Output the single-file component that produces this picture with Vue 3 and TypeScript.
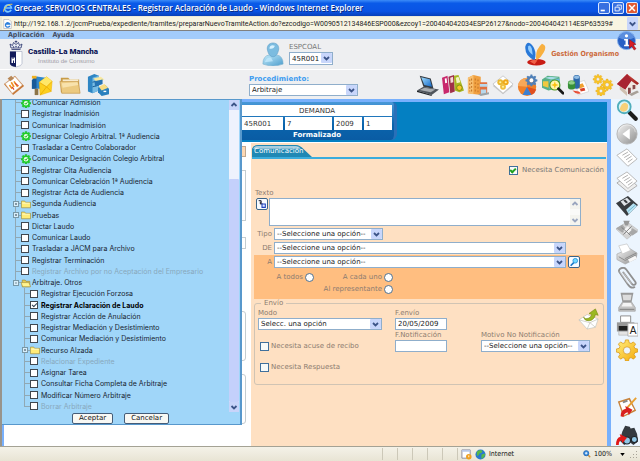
<script setup lang="ts">
import { ref } from 'vue'

type NodeKind = 'check' | 'done' | 'folder' | 'open'
interface TreeNode {
  label: string
  kind: NodeKind
  level: number
  off?: boolean
  last?: boolean
}

const nodes: TreeNode[] = [
  { label: 'Comunicar Admisión', kind: 'done', level: 0 },
  { label: 'Registrar Inadmisión', kind: 'check', level: 0 },
  { label: 'Comunicar Inadmisión', kind: 'check', level: 0 },
  { label: 'Designar Colegio Arbitral. 1ª Audiencia', kind: 'done', level: 0 },
  { label: 'Trasladar a Centro Colaborador', kind: 'check', level: 0 },
  { label: 'Comunicar Designación Colegio Arbitral', kind: 'done', level: 0 },
  { label: 'Registrar Cita Audiencia', kind: 'check', level: 0 },
  { label: 'Comunicar Celebración 1ª Audiencia', kind: 'check', level: 0 },
  { label: 'Registrar Acta de Audiencia', kind: 'check', level: 0 },
  { label: 'Segunda Audiencia', kind: 'folder', level: 0 },
  { label: 'Pruebas', kind: 'folder', level: 0 },
  { label: 'Dictar Laudo', kind: 'check', level: 0 },
  { label: 'Comunicar Laudo', kind: 'check', level: 0 },
  { label: 'Trasladar a JACM para Archivo', kind: 'check', level: 0 },
  { label: 'Registrar Terminación', kind: 'check', level: 0 },
  { label: 'Registrar Archivo por no Aceptación del Empresario', kind: 'check', level: 0, off: true },
  { label: 'Arbitraje. Otros', kind: 'open', level: 0, last: true },
  { label: 'Registrar Ejecución Forzosa', kind: 'check', level: 1 },
  { label: 'Registrar Aclaración de Laudo', kind: 'check', level: 1 },
  { label: 'Registrar Acción de Anulación', kind: 'check', level: 1 },
  { label: 'Registrar Mediación y Desistimiento', kind: 'check', level: 1 },
  { label: 'Comunicar Mediación y Desistimiento', kind: 'check', level: 1 },
  { label: 'Recurso Alzada', kind: 'folder', level: 1 },
  { label: 'Relacionar Expediente', kind: 'check', level: 1, off: true },
  { label: 'Asignar Tarea', kind: 'check', level: 1 },
  { label: 'Consultar Ficha Completa de Arbitraje', kind: 'check', level: 1 },
  { label: 'Modificar Número Arbitraje', kind: 'check', level: 1 },
  { label: 'Borrar Arbitraje', kind: 'check', level: 1, off: true, last: true },
]

const selected = ref('Registrar Aclaración de Laudo')
const url = ref(
  'http://192.168.1.2/jccmPrueba/expediente/tramites/prepararNuevoTramiteAction.do?ezcodigo=W0090512134846ESP000&ezcoy1=200404042034ESP26127&nodo=200404042114ESP63539#',
)
const needsNotice = ref(true)
const sendDate = ref('20/05/2009')

const quickTools = ['note', 'mailbox', 'folder-lg', 'cabinet']
const moduleTools = ['laptop', 'binders', 'building', 'seal', 'chart', 'search-box', 'server', 'gears', 'house']
const sideTools = ['magnifier', 'back', 'page', 'pages', 'floppy', 'puzzle', 'printer', 'clip', 'scanner', 'print-a', 'gear']
const sideEndTools = ['clipboard', 'binoculars']
</script>

<template>
  <svg class="defs" aria-hidden="true">
    <defs>
      <linearGradient id="g-blue" x1="0" y1="0" x2="1" y2="1"><stop offset="0" stop-color="#9fdcff" /><stop offset="1" stop-color="#1468c8" /></linearGradient>
      <linearGradient id="g-sky" x1="0" y1="0" x2="1" y2="1"><stop offset="0" stop-color="#c4ecfc" /><stop offset="1" stop-color="#4c9ccc" /></linearGradient>
      <linearGradient id="g-gold" x1="0" y1="0" x2="1" y2="1"><stop offset="0" stop-color="#fff080" /><stop offset="1" stop-color="#f4a808" /></linearGradient>
      <linearGradient id="g-grey" x1="0" y1="0" x2="1" y2="1"><stop offset="0" stop-color="#f4f4f4" /><stop offset="1" stop-color="#8e8e8e" /></linearGradient>
      <linearGradient id="g-red" x1="0" y1="0" x2="1" y2="1"><stop offset="0" stop-color="#e05a50" /><stop offset="1" stop-color="#8e1414" /></linearGradient>
      <path id="cog" d="M10.3 1h3.4l.6 3 2.1.9 2.6-1.7 2.4 2.4-1.7 2.6.9 2.1 3 .6v3.4l-3 .6-.9 2.1 1.7 2.6-2.4 2.4-2.6-1.7-2.1.9-.6 2.8h-3.4l-.6-2.8-2.1-.9L5 22l-2.4-2.4L4.300 17l-.9-2.100-3-.6v-3.400l3-.6.9-2.100L2.600 5.600 5 3.200l2.600 1.700L9.700 4zM12 8.500a4 4 0 1 0 0 8 4 4 0 0 0 0-8z" fill-rule="evenodd" />
    </defs>
    <symbol id="note" viewBox="0 0 24 24">
      <path d="M1 11 13 2l10 11-12 10z" fill="#c87838" /><path d="M2.500 10.500 13 3l8 9-11 9z" fill="#fff" stroke="#d8c8b8" stroke-width=".6" />
      <path d="m9 9 3 5M7 12l3 4M12 8l4 6" stroke="#f09020" stroke-width="1.800" /><path d="m13 10 4 3M10 14l2 3" stroke="#d84030" stroke-width="1.200" /><path d="m5 5 4-3 3 3-4 3z" fill="#b88858" />
    </symbol>
    <symbol id="mailbox" viewBox="0 0 24 24">
      <path d="M1 7q3-5 7-4l8 1v12H1z" fill="#2e86cc" /><path d="M1 7q2-4 5-3v12H1z" fill="#185a98" /><path d="M4 16h4v7H4z" fill="#8c7448" />
      <path d="m9 9 8-6 6 5-1 11-12 4z" fill="#fcd020" stroke="#f0b408" stroke-width=".6" /><path d="m9 9 8-6 6 5-6 6z" fill="#ffe868" /><path d="m9 9 8 5 6-6M10 23l7-9 5 5" fill="none" stroke="#e8a400" stroke-width=".8" /><path d="M1 2h5v3H1z" fill="#f0b020" />
    </symbol>
    <symbol id="folder-lg" viewBox="0 0 24 24">
      <path d="M2 4h8l2 2h10v14H2z" fill="#c89c48" /><path d="M4 6h17v3H4z" fill="#fff8e0" /><path d="M1 8h20l2 13H3z" fill="#ecca80" stroke="#c09040" stroke-width=".7" /><path d="m3 10 17-1 1 3-17 3z" fill="#f8e2ac" />
    </symbol>
    <symbol id="cabinet" viewBox="0 0 24 24">
      <path d="m1 3 7-3 5 2v16l-7 3-5-2z" fill="#2f86c4" /><path d="M6 4v17l7-3V2z" fill="#78bce4" /><path d="m6 9 7-2M6 14l7-2" stroke="#145890" />
      <path d="m7 5 8-2 4 3-8 3z" fill="#f8e8a0" /><path d="m8 8 9-2v5l-8 3z" fill="#2674b4" /><path d="m12 15 8-3 4 4v6l-8 2-4-4z" fill="#2a80be" /><path d="m13 14 6-3 4 4-7 3z" fill="#f8dc80" /><path d="M18 19h3" stroke="#fff" stroke-width="1.500" />
    </symbol>
    <symbol id="laptop" viewBox="0 0 24 24">
      <path d="m3 2 12 3 3 11-11-2z" fill="#343c44" /><path d="m4.500 3.500 9.500 2.300 2.300 8L8 12z" fill="url(#g-blue)" /><path d="m0 18 7-4 17 3-8 6z" fill="#50555c" /><path d="m3 17.500 5-2.500 12 2-5 3z" fill="#a8acb0" /><path d="m0 18 16 5v1L0 19.500z" fill="#202428" />
    </symbol>
    <symbol id="binders" viewBox="0 0 24 24">
      <path d="m0 4 6-2 2 18-6 2z" fill="#c8286c" /><path d="m3 5 2-.5.500 5-2 .5z" fill="#fff" /><path d="m7 3 6-2 1 18-5 2z" fill="#a03048" /><path d="m9 4 3-1 .4 6-3 .8z" fill="#f4d8d8" /><path d="m13 2 5-1 6 17-5 2-5-2z" fill="#a8b820" /><path d="m15 4 3-1 2 6-4 1z" fill="#f4f4c0" /><circle cx="19" cy="15" r="3" fill="#f4c828" stroke="#808810" />
    </symbol>
    <symbol id="building" viewBox="0 0 24 24">
      <path d="m1 4 6-3 8 2v20L1 21z" fill="#f0a040" /><path d="m1 4 6-3v21l-6-1z" fill="#f8c070" /><path d="M3 6v13M5 5v14M9 5v15M12 6v14" stroke="#c87828" stroke-dasharray="2 2" stroke-width="1.200" /><path d="M14 9h8v13h-8z" fill="#e07040" /><path d="M14 11h8v3h-8zM15 17h6v5h-6z" fill="#b8d8ec" /><path d="m12 22 12-2v2l-9 2z" fill="#9ca4a8" />
    </symbol>
    <symbol id="seal" viewBox="0 0 24 24">
      <path d="m1 13 11-10 11 10-11 9z" fill="#c8c8c8" /><path d="M1 11 12 2l11 9-11 10z" fill="#fff" stroke="#bcbcbc" stroke-width=".8" /><circle cx="9" cy="9" r="3.200" fill="#eab830" /><circle cx="15" cy="9" r="3.200" fill="#f0a818" /><circle cx="12" cy="14" r="3.200" fill="#f0c040" /><circle cx="9" cy="9" r="1.200" fill="#fff0a0" /><circle cx="15" cy="9" r="1.200" fill="#fff0a0" /><circle cx="12" cy="14" r="1.200" fill="#fff0a0" />
    </symbol>
    <symbol id="chart" viewBox="0 0 24 24">
      <circle cx="11" cy="14" r="10" fill="#f08028" /><path d="M11 14 1 13a10 10 0 0 1 10-9z" fill="#f8a858" /><path d="m11 14 5 9H6z" fill="#3c80d0" /><path d="M11 14 21 17q-1 4-5 6z" fill="#e05020" /><g transform="translate(9 0) scale(.56)"><use href="#cog" fill="#5080b8" /></g><circle cx="15.700" cy="7" r="2" fill="#fff" />
    </symbol>
    <symbol id="search-box" viewBox="0 0 24 24">
      <path d="m0 6 6-4 13 1 1 12-13 3-7-3z" fill="#58b088" /><path d="M1 8h6v7l-6-2z" fill="#f0c840" /><path d="m8 7 11-2v8L8 16z" fill="#68b8d8" /><path d="m3 4 6-1 9 1-8 2z" fill="#a8dce8" /><circle cx="14" cy="12" r="5.500" fill="#fff4a8" stroke="#50981c" stroke-width="1.200" /><path d="m14 8 1 3 3 1-3 1-1 3-1-3-3-1 3-1z" fill="#f8c010" /><path d="m18 16 5 5" stroke="#181818" stroke-width="3" stroke-linecap="round" />
    </symbol>
    <symbol id="server" viewBox="0 0 24 24">
      <path d="m10 10 9-3 5 12-12 4z" fill="#fff" stroke="#c8c8c8" stroke-width=".6" /><path d="m12 12 5-2 2 4-6 2z" fill="#f0a030" /><path d="m14 16 5-1 1 3-5 1z" fill="#d84028" /><rect x="7" y="1" width="7" height="15" rx="3" fill="#2c68a8" /><rect x="1" y="7" width="8" height="10" rx="3" fill="#389038" /><ellipse cx="10.500" cy="3.500" rx="3" ry="2" fill="#90bce4" /><ellipse cx="5" cy="9.500" rx="3.500" ry="2" fill="#90d088" /><path d="M6 18q4 5 9 3l-2-2z" fill="#e85038" />
    </symbol>
    <symbol id="gears" viewBox="0 0 24 24">
      <g fill="#f8c428" stroke="#e0a010" stroke-width=".8"><g transform="translate(1 0) scale(.46)"><use href="#cog" /></g><g transform="translate(10 5) scale(.54)"><use href="#cog" /></g><g transform="translate(4 12.500) scale(.48)"><use href="#cog" /></g></g>
    </symbol>
    <symbol id="house" viewBox="0 0 24 24">
      <path d="m3 12 8 8 11-4V8L12 3z" fill="#f0e8e0" /><path d="m3 12 8 8v4l-8-7z" fill="#d0c0b0" /><path d="M0 11 11 0l13 10-2 2-7-5-6 10z" fill="url(#g-red)" /><path d="m0 11 9 6 7-10-5-7z" fill="#a82430" /><path d="M12 15h3v6l-3 1zM17 12h3v4l-3 1z" fill="#884848" /><path d="m13 22 9-4 2 2-8 4z" fill="#a8a098" />
    </symbol>
    <symbol id="magnifier" viewBox="0 0 24 24">
      <path d="m15 15 6.500 6.500" stroke="#1c1c1c" stroke-width="4.500" stroke-linecap="round" /><circle cx="9" cy="8.500" r="7" fill="#d8f4f8" stroke="#50aebc" stroke-width="2" /><path d="M4 11q2-7 6-7 4 1 3 5 0 4-5 5-3 0-4-3z" fill="#f8d078" />
    </symbol>
    <symbol id="back" viewBox="0 0 24 24">
      <circle cx="12" cy="12" r="11" fill="url(#g-grey)" stroke="#b4b4b4" /><path d="m7 12 8-6v12z" fill="#fff" /><path d="M3 10a9 8 0 0 1 18 0" fill="none" stroke="#fff" opacity=".5" />
    </symbol>
    <symbol id="page" viewBox="0 0 24 24">
      <path d="M1 9 12 2l11 11-10 8z" fill="#fff" stroke="#b4b4b4" /><path d="m7 9 6-3.500M9 11.500 15 8M11 14l6-4M13 16.500l5-3.500" stroke="#a8a8a8" />
    </symbol>
    <symbol id="pages" viewBox="0 0 24 24">
      <path d="M1 13 12 6l11 10-10 7z" fill="#eee" stroke="#a8a8a8" /><path d="M1 8 12 1l11 10-10 8z" fill="#fff" stroke="#b4b4b4" /><path d="m7 8 6-3.500M9 10.500 15 7M11 13l6-4M13 15.500l5-3.500" stroke="#a8a8a8" />
    </symbol>
    <symbol id="floppy" viewBox="0 0 24 24">
      <path d="M0 9 13 1l11 10-12 12z" fill="#383c40" /><path d="m5 7 7-4 4 4-7 5z" fill="#e0e4e8" /><path d="m8 6 2-1 3 3-2 1z" fill="#383c40" /><path d="m11 16 8-7 4 3-9 9z" fill="#b8e4f4" /><path d="m13 18 8-7" stroke="#6cb0cc" />
    </symbol>
    <symbol id="puzzle" viewBox="0 0 24 24">
      <path d="m0 11 12-8 12 9-12 10z" fill="#d4d4d4" stroke="#b8b8b8" stroke-width=".6" /><path d="M8 2h7l-2 5h-3z" fill="#989898" /><path d="m0 10 7-4 4 5-4 4zM13 15l5-5 6 4-6 4z" fill="#a8a8a8" /><path d="m8 12 5-4 4 4-5 5z" fill="#f4f4f4" /><path d="m6 9 10 9M17 8 8 17" stroke="#777" />
    </symbol>
    <symbol id="printer" viewBox="0 0 24 24">
      <path d="m1 12 14-6 8 5-1 6-12 6-9-5z" fill="url(#g-grey)" stroke="#9c9c9c" stroke-width=".6" /><path d="m3 3 9-2 4 7-9 4z" fill="#fff" stroke="#c0c0c0" stroke-width=".7" /><path d="m10 17 12-6M3 15l7 4 12-6" fill="none" stroke="#888" /><path d="m13 18 8-4 2 3-8 4z" fill="#f8f8f8" />
    </symbol>
    <symbol id="clip" viewBox="0 0 24 24">
      <path d="m8 6 9 12c2 3 6 1 4-2L11 2.500C8-1 1 2 4 6l9 13c2 3 5 4 7 3" fill="none" stroke="#909090" stroke-width="2" stroke-linecap="round" /><path d="m8 6 9 12M4 5l9 13" stroke="#eee" stroke-width=".6" />
    </symbol>
    <symbol id="scanner" viewBox="0 0 24 24">
      <path d="M5 2h14l-2 10H7z" fill="#999" /><path d="M7 4h10l-1 6H8z" fill="#dcdcdc" /><path d="M7 12h10l4 6v4H3v-4z" fill="#c4c4c4" stroke="#999" stroke-width=".7" /><path d="M8 13h8l2 4H6z" fill="#f4f4f4" /><path d="M4 20h16" stroke="#787878" />
    </symbol>
    <symbol id="print-a" viewBox="0 0 24 24">
      <path d="M5 1h11v7H5z" fill="#fff" stroke="#888" /><path d="M1 8h19v10H1z" fill="#989898" /><path d="M3 12h11v5H3z" fill="#202020" /><path d="M3 18h11v4H3z" fill="#e4e4e4" stroke="#999" stroke-width=".5" /><path d="M13 9h11v14H13z" fill="#fff" stroke="#b0b0b0" /><text x="15" y="20.500" font-size="11" font-family="Liberation Sans, sans-serif" fill="#222">A</text>
    </symbol>
    <symbol id="gear" viewBox="0 0 24 24"><use href="#cog" fill="url(#g-gold)" stroke="#d89410" stroke-width=".8" /></symbol>
    <symbol id="clipboard" viewBox="0 0 24 24">
      <path d="m2 6 13-4 7 14-14 7z" fill="#c8843c" /><path d="m4 7 10-3 6 11-11 6z" fill="#fff" /><path d="m7 6 5-2 1 2-5 2z" fill="#888" /><path d="m11 14 11-12" stroke="#e8a030" stroke-width="2" /><path d="M5 22q0-7 6-8l-1-3 8 4-4 6-1-3q-4 0-5 5z" fill="#d82020" />
    </symbol>
    <symbol id="binoculars" viewBox="0 0 24 24">
      <path d="m7 8 3-6 5 1 1 2 4-1 3 7 1 8-5 4-5-4-5 4-5-5z" fill="#343a40" /><circle cx="12" cy="18" r="3.800" fill="#90c8e8" stroke="#202428" stroke-width="1.200" /><circle cx="20" cy="17" r="3.300" fill="#90c8e8" stroke="#202428" stroke-width="1.200" /><path d="M0 23q0-8 5-9l-1-3 8 4-5 6-1-3q-3 0-3 5z" fill="#e01818" />
    </symbol>
    <symbol id="check-gear" viewBox="0 0 24 24"><use href="#cog" fill="#20d028" stroke="#10b018" /><circle cx="12" cy="12.500" r="5.500" fill="#e8ffe4" /><path d="m9 12 2.500 3 4-5" fill="none" stroke="#18a820" stroke-width="2.200" /></symbol>
    <symbol id="dir" viewBox="0 0 24 20"><path d="M1 3h8l2 3h12v13H1z" fill="#ffec78" stroke="#9c8838" stroke-width="1.600" /><path d="M3 8h18" stroke="#fffbd0" stroke-width="2" /></symbol>
    <symbol id="dir-open" viewBox="0 0 24 20"><path d="M3 3h7l2 3h9v13H3z" fill="#e8cc50" stroke="#9c8838" stroke-width="1.600" /><path d="M0 9h19l4 10H4z" fill="#fff490" stroke="#9c8838" stroke-width="1.400" /></symbol>
    <symbol id="chev" viewBox="0 0 10 10"><path d="m2.500 4 2.500 2.500L7.500 4" fill="none" stroke="#3c5488" stroke-width="1.800" /></symbol>
  </svg>

  <div class="window">
    <header class="titlebar">
      <svg class="ie" viewBox="0 0 16 16"><path d="M13 11a5.500 5.500 0 1 1 .5-3H4" fill="none" stroke="#7cc8ff" stroke-width="2.600" /><path d="M1 14C-1 10 8 1 15 2" fill="none" stroke="#f8d048" stroke-width="1.500" /></svg>
      <h1>Grecae: SERVICIOS CENTRALES - Registrar Aclaración de Laudo - Windows Internet Explorer</h1>
      <button class="wbtn" aria-label="Minimizar"><svg viewBox="0 0 12 12"><path d="M2 9h5" stroke="#fff" stroke-width="2" /></svg></button>
      <button class="wbtn" aria-label="Restaurar"><svg viewBox="0 0 12 12"><path d="M5 4V2.500h5v5H8M2.500 5h5v4.500h-5z" fill="none" stroke="#fff" /></svg></button>
      <button class="wbtn close" aria-label="Cerrar"><svg viewBox="0 0 12 12"><path d="m2.500 2.500 7 7m0-7-7 7" stroke="#fff" stroke-width="1.800" /></svg></button>
    </header>

    <div class="address">
      <div class="address-box">
        <svg class="page-ie" viewBox="0 0 12 12"><path d="M1 0h7l3 3v9H1z" fill="#fff" stroke="#99a" stroke-width=".7" /><path d="M9 8.500A3 3 0 1 1 9 6H3.500" fill="none" stroke="#2c80dc" stroke-width="1.700" /></svg>
        <input v-model="url" aria-label="Dirección" />
        <svg class="arrow"><use href="#chev" /></svg>
      </div>
    </div>

    <nav class="menu"><a href="#">Aplicación</a><a href="#">Ayuda</a></nav>

    <div class="brand-row">
      <div class="brand">
        <svg class="shield" viewBox="0 0 28 54">
          <path d="M4 15 2 7l5 3 2-6 5 4 5-4 2 6 5-3-2 8z" fill="#e8ecf4" stroke="#28346c" stroke-width="1.600" /><path d="M14 0v5M11.500 2h5M5 18h18" stroke="#28346c" stroke-width="1.600" /><circle cx="9" cy="13" r="1.400" fill="#28346c" /><circle cx="14" cy="12" r="1.400" fill="#28346c" /><circle cx="19" cy="13" r="1.400" fill="#28346c" />
          <path d="M2 22h24v24q0 5-12 7-12-2-12-7z" fill="#fff" stroke="#9ca4bc" stroke-width="1.200" /><path d="M2 22h12v31Q2 51 2 46z" fill="#141c5c" /><path d="M5 34h2v3h2v-3h3v11H5z" fill="#fff" /><path d="M8 40h2v5H8z" fill="#141c5c" />
        </svg>
        <p><strong>Castilla-La Mancha</strong><span>Instituto de Consumo</span></p>
      </div>
      <div class="user">
        <svg class="person" viewBox="0 0 24 26"><path d="M1 24q0-9 7-10h8q7 1 7 10-11 4-22 0z" fill="url(#g-sky)" stroke="#78b0d0" stroke-width=".7" /><path d="M12 1c5 0 7 4 6 8s-3 7-6 7-5-3-6-7 1-8 6-8z" fill="#7cbce0" stroke="#60a0c8" stroke-width=".7" /><path d="M8 7q1-5 6-3-1 4-6 3z" fill="#d8f2ff" /><path d="M3 22q2-6 7-5l2 4z" fill="#c8ecff" opacity=".7" /></svg>
        <div>
          <label for="office">ESPCOAL</label>
          <div class="sel sel-office"><select id="office"><option>45R001</option></select><svg class="arrow"><use href="#chev" /></svg></div>
        </div>
      </div>
      <a class="org" href="#">
        <svg viewBox="0 0 24 26"><ellipse cx="13" cy="22" rx="10" ry="3.500" fill="#c81c14" /><path d="M13 20Q11 9 19 2q6 2 2 9-3 6-8 9z" fill="#f8b040" /><path d="M11 20Q0 15 1 5q2-7 7-2 6 7 3 17z" fill="#2878d8" /><path d="M4 5q2-3 4 2l1 7Q3 10 4 5z" fill="#90ccff" /><path d="M6 21q4-3 8-1l-3 4z" fill="#f06048" /></svg>
        Gestión Organismo
      </a>
      <button class="info" aria-label="Información">
        <svg viewBox="0 0 22 22"><circle cx="11" cy="10" r="9.500" fill="#2860c4" stroke="#8cb4ec" /><path d="M3 7a8 7 0 0 1 16 0q-8 4-16 0z" fill="#7cacf0" opacity=".6" /><circle cx="11" cy="5" r="1.700" fill="#fff" /><path d="M8.500 8.500h4v6h1.500V16H8.500v-1.500H10V10H8.500z" fill="#fff" /><path d="m14 9 7 5-3 .6 3 4-2 1.400-2.600-4L14 18z" fill="#d81c24" stroke="#801018" stroke-width=".5" /></svg>
      </button>
    </div>

    <div class="tool-row">
      <div class="tools quick"><button v-for="t in quickTools" :key="t" class="tool" :aria-label="t"><svg><use :href="'#' + t" /></svg></button></div>
      <div class="proc">
        <label for="proc">Procedimiento:</label>
        <div class="sel"><select id="proc"><option>Arbitraje</option></select><svg class="arrow"><use href="#chev" /></svg></div>
      </div>
      <div class="tools modules"><button v-for="t in moduleTools" :key="t" class="tool" :aria-label="t"><svg><use :href="'#' + t" /></svg></button></div>
    </div>

    <main class="main">
      <section class="frame">
        <div class="band">
          <table class="case">
            <colgroup><col class="c-office" /><col class="c-num" /><col class="c-year" /><col /></colgroup>
            <thead><tr><th colspan="4">DEMANDA</th></tr></thead>
            <tbody><tr><td>45R001</td><td>7</td><td>2009</td><td>1</td></tr></tbody>
            <tfoot><tr><td colspan="4">Formalizado</td></tr></tfoot>
          </table>
        </div>
        <div class="columns">
          <div class="under"><i class="u-tab"></i><i class="u-box"></i><i class="u-line"></i><i class="u-set"></i><i class="u-set"></i></div>
          <form class="panel" @submit.prevent>
            <div class="tabs"><svg class="tab-shape" viewBox="0 0 60 13" preserveAspectRatio="none"><path d="M0 13V4Q1 0 6 0h38q4 0 8 5l8 8z" fill="#2088b4" /><path d="M1 4q1-3 5-3h38q3 0 5 3z" fill="#a8cede" /></svg><a href="#">Comunicación</a></div>
            <label class="notice"><input v-model="needsNotice" type="checkbox" />Necesita Comunicación</label>
            <label class="cap" for="texto">Texto</label>
            <div class="text-row">
              <button class="mini" aria-label="Insertar texto"><svg viewBox="0 0 12 12"><path d="M2 2h3v4M4 3v3h3" fill="none" stroke="#223" stroke-width="1.200" /><path d="M6 6h4v4H6z" fill="#dde8ff" stroke="#2244c0" stroke-width="1.300" /></svg></button>
              <div class="area"><textarea id="texto"></textarea><div class="area-bar"><svg class="flip"><use href="#chev" /></svg><svg><use href="#chev" /></svg></div></div>
            </div>
            <div class="row"><label for="tipo">Tipo</label><div class="sel sel-type"><select id="tipo"><option>--Seleccione una opción--</option></select><svg class="arrow"><use href="#chev" /></svg></div></div>
            <div class="row"><label for="de">DE</label><div class="sel sel-wide"><select id="de"><option>--Seleccione una opción--</option></select><svg class="arrow"><use href="#chev" /></svg></div></div>
            <div class="to">
              <div class="row"><label for="a">A</label><div class="sel sel-wide"><select id="a"><option>--Seleccione una opción--</option></select><svg class="arrow"><use href="#chev" /></svg></div>
                <button class="mini" aria-label="Buscar"><svg viewBox="0 0 12 12"><path d="m2 10.500 4-4" stroke="#1878c8" stroke-width="2" /><circle cx="7.500" cy="4.500" r="2.800" fill="#70d8ff" stroke="#2090d8" /></svg></button></div>
              <div class="radios">
                <label>A todos<input type="radio" name="dest" /></label><label>A cada uno<input type="radio" name="dest" /></label>
                <label class="second">Al representante<input type="radio" name="dest" /></label>
              </div>
            </div>
            <fieldset>
              <legend>Envío</legend>
              <div class="send">
                <div class="mode">
                  <label for="modo">Modo</label>
                  <div class="sel"><select id="modo"><option>Selecc. una opción</option></select><svg class="arrow"><use href="#chev" /></svg></div>
                  <label class="tick"><input type="checkbox" />Necesita acuse de recibo</label>
                  <label class="tick"><input type="checkbox" />Necesita Respuesta</label>
                </div>
                <div class="dates">
                  <label for="fenvio">F.envío</label><input id="fenvio" v-model="sendDate" type="text" />
                  <label for="fnot">F.Notificación</label><input id="fnot" type="text" />
                </div>
                <div class="reason">
                  <svg class="envelope" viewBox="0 0 24 24"><path d="m1 13 9-6 12 5-3 9-9 2z" fill="#fff" stroke="#c8c8c0" stroke-width=".8" /><path d="m1 13 12 3 9-4M10 23l3-7 6 5" fill="none" stroke="#c4c4bc" stroke-width=".8" /><path d="M6 10q2 3 6 1 3-2 3-4l-3-1 7-5 3 7-3-1q-1 6-7 7-5 0-6-4z" fill="#9cb820" stroke="#788c10" stroke-width=".7" /></svg>
                  <label for="motivo">Motivo No Notificación</label>
                  <div class="sel"><select id="motivo"><option>--Seleccione una opción--</option></select><svg class="arrow"><use href="#chev" /></svg></div>
                </div>
              </div>
            </fieldset>
          </form>
        </div>
      </section>

      <aside class="side">
        <button v-for="t in sideTools" :key="t" class="tool" :aria-label="t"><svg><use :href="'#' + t" /></svg></button>
        <span class="spacer"></span>
        <button v-for="t in sideEndTools" :key="t" class="tool end" :aria-label="t"><svg><use :href="'#' + t" /></svg></button>
      </aside>

      <div class="popup">
        <div class="tree-wrap">
          <ul class="tree">
            <li v-for="n in nodes" :key="n.label" :class="['lv' + n.level, { off: n.off, last: n.last }]">
              <span class="branch"><button v-if="n.kind === 'folder' || n.kind === 'open'" class="toggle" :aria-label="n.label"><svg viewBox="0 0 7 7"><path :d="n.kind === 'folder' ? 'M2 3.500h3M3.500 2v3' : 'M2 3.500h3'" stroke="#123" /></svg></button></span>
              <svg v-if="n.kind !== 'check'" class="glyph"><use :href="n.kind === 'done' ? '#check-gear' : n.kind === 'folder' ? '#dir' : '#dir-open'" /></svg>
              <label v-if="n.kind === 'check'" :class="{ on: selected === n.label }"><input v-model="selected" type="radio" name="tramite" class="box" :value="n.label" :disabled="n.off" />{{ n.label }}</label>
              <span v-else class="name">{{ n.label }}</span>
            </li>
          </ul>
          <div class="scroll"><svg class="flip"><use href="#chev" /></svg><div class="thumb"></div><svg><use href="#chev" /></svg></div>
        </div>
        <div class="actions"><button>Aceptar</button><button>Cancelar</button></div>
      </div>
    </main>

    <footer class="status">
      <i></i><i></i><i></i><i></i><i></i><i></i>
      <svg class="s-icon" viewBox="0 0 12 12"><path d="M1 1h9v9H1z" fill="#fff" stroke="#889" /><path d="M1 1h9v2H1z" fill="#b8c8e8" /><circle cx="8.500" cy="8.500" r="3" fill="#f0a020" /><path d="M8.500 7v2" stroke="#fff" /></svg>
      <svg class="s-icon" viewBox="0 0 12 12"><circle cx="6" cy="6" r="5.500" fill="#2878d0" /><path d="M2 3q3-3 6-1 0 3-3 3-1 3-3 2zM7 6l4-1q0 4-4 6z" fill="#58b848" /></svg>
      <span>Internet</span>
      <svg class="zoom-icon" viewBox="0 0 10 10"><path d="m6 6 3 3" stroke="#c89040" stroke-width="1.800" /><circle cx="4" cy="4" r="3.200" fill="#3c90e0" stroke="#1c60b0" /><path d="M2.500 4h3M4 2.500v3" stroke="#fff" /></svg>
      <span class="pct">100%</span>
      <svg class="caret" viewBox="0 0 6 4"><path d="M0 0h6L3 4z" /></svg>
      <svg class="grip" viewBox="0 0 8 8"><path d="M6 1h1v1H6zM6 4h1v1H6zM6 7h1v1H6zM3 4h1v1H3zM3 7h1v1H3zM0 7h1v1H0z" fill="#a8a498" /></svg>
    </footer>
  </div>
</template>

<style>
body { background: #fff; }
</style>

<style scoped>
* { box-sizing: border-box; }
.defs { position: absolute; width: 0; height: 0; }
.window { display: flex; flex-direction: column; min-height: 100vh; font: 7px/10px "DejaVu Sans", Verdana, sans-serif; color: #333; }
button, input, select, textarea { font: inherit; margin: 0; padding: 0; border: 0; background: none; color: inherit; }
a { color: inherit; text-decoration: none; }
svg { display: block; }

.titlebar { display: flex; align-items: center; gap: 1px; height: 16px; padding: 0 2px 0 3px; background: linear-gradient(#3c8cf8, #0a5ae8 20%, #0a54e4 70%, #0840b8); color: #fff; }
.titlebar h1 { flex: 1; margin: 0; font: 600 8px/14px "Open Sans", sans-serif; text-shadow: 1px 1px #0a2c80; white-space: nowrap; }
.ie { width: 10px; height: 10px; }
.wbtn { width: 12px; height: 12px; margin-left: 1px; border: 1px solid #d8e6ff; border-radius: 2px; background: #3870e0; }
.wbtn svg { width: 10px; height: 10px; }
.close { background: #e05a34; }

.address { height: 15px; padding: 1px 2px; background: #ece9d8; border-bottom: 1px solid #808080; }
.address-box { display: flex; align-items: center; gap: 2px; height: 13px; padding-left: 1px; background: #f8f5e2; }
.address-box input { flex: 1; height: 12px; font: 7px/12px Roboto, Tahoma, sans-serif; color: #222; }
.page-ie { width: 9px; height: 10px; }
.arrow { width: 11px; height: 100%; background: #c8d6fb; border-radius: 1px; pointer-events: none; }

.menu { display: flex; gap: 8px; height: 8px; padding-left: 8px; background: #a2cbfb; color: #444c60; font-family: "DejaVu Sans Condensed", Tahoma, sans-serif; font-weight: bold; line-height: 8px; }

.brand-row { position: relative; display: flex; height: 31px; border-bottom: 1px solid #fff; background: #eeeff1; align-items: center; }
.brand { display: flex; gap: 5px; width: 262px; padding-left: 9px; align-items: center; }
.shield { width: 14px; height: 28px; }
.brand p { display: flex; flex-direction: column; margin: 0; padding-top: 4px; }
.brand strong { font: 900 8px/10px Roboto, sans-serif; color: #101858; }
.brand span { padding-left: 10px; font: 6px/8px "Liberation Sans", sans-serif; color: #a0a0a8; }
.user { display: flex; gap: 5px; flex: 1; align-items: center; }
.person { width: 22px; height: 24px; }
.user label { display: block; line-height: 9px; color: #777; }
.sel { display: grid; height: 12px; border: 1px solid #8faecb; background: #fff; grid-template-columns: 1fr 11px; }
.sel select { grid-area: 1 / 1 / 2 / 3; min-width: 0; padding-left: 2px; appearance: none; color: #222; outline: 0; }
.sel .arrow { grid-area: 1 / 2; height: 10px; }
.sel-office { width: 44px; height: 13px; }
.org { display: flex; align-items: center; gap: 4px; padding-right: 21px; color: #cc6a3c; font-family: "DejaVu Sans Condensed", Verdana, sans-serif; font-weight: bold; }
.org svg { width: 23px; height: 24px; }
.info { position: absolute; top: -8px; right: 3px; width: 21px; height: 21px; }

.tool-row { display: flex; align-items: center; height: 29px; background: #eeeff1; }
.tools { display: flex; }
.quick { width: 249px; gap: 6px; padding-left: 3px; }
.modules { gap: 3px; padding-right: 1px; }
.tool { width: 22px; height: 22px; flex: none; }
.tool svg { width: 22px; height: 22px; }
.proc { flex: 1; }
.proc label { display: block; color: #3c9cf0; font-weight: bold; }
.proc .sel { width: 109px; }

.main { position: relative; display: flex; flex: 1; border-left: 2px solid #98948c; }
.frame { display: flex; flex: 1; flex-direction: column; border: 4px solid #78b0fc; border-width: 3px 4px 0 2px; background: #fff; }
.band { height: 41px; padding-left: 236px; background: #0480c2; border-bottom: 1px solid #fff; }
.case { width: 157px; height: 38px; padding-top: 2px; border-collapse: separate; border-spacing: 2px 1px; background: linear-gradient(#4898d8, #0a64ac 60%, #0a5ca4); border-right: 3px solid #2a70b8; border-radius: 0 5px 6px 0; text-align: left; table-layout: fixed; }
.case th, .case tbody td { height: 11px; padding: 0 2px; background: #fff; color: #333; font-weight: normal; line-height: 10px; }
.case th { text-align: center; }
.c-office { width: 41px; }
.c-num { width: 47px; }
.c-year { width: 28px; }
.case tfoot td { padding: 0; color: #fff; font-weight: bold; text-align: center; line-height: 8px; }

.columns { display: flex; flex: 1; }
.under { display: flex; flex-direction: column; width: 247px; padding-right: 5px; padding-top: 3px; }
.under i { border: 1px solid #c4ccd0; }
.under .u-tab { height: 11px; background: #fdd8b4; border-color: #c0a890; }
.under .u-box { height: 51px; margin-top: 13px; }
.under .u-line { height: 12px; margin-top: 16px; }
.under .u-set { height: 50px; margin-top: 62px; border-radius: 3px; }
.under .u-set + .u-set { margin-top: 13px; }

.panel { display: flex; flex: 1; flex-direction: column; padding: 2px 3px 0 3px; background: #fee0c2; color: #8c7c70; }
.tabs { display: grid; height: 14px; margin-left: -2px; margin-right: -2px; border-bottom: 2px solid #3cacdc; grid-template-columns: 60px 1fr; align-items: end; }
.tab-shape { grid-area: 1 / 1; width: 60px; height: 12px; }
.tabs a { grid-area: 1 / 1; padding-left: 2px; color: #fff; line-height: 11px; }
.notice { display: flex; gap: 4px; align-items: center; align-self: flex-end; margin-top: 6px; color: #777; }
input[type="checkbox"] { display: grid; width: 9px; height: 9px; border: 1px solid #40709c; background: #f8faf8; appearance: none; place-items: center; }
input[type="checkbox"]:checked::before { content: ""; width: 4px; height: 2px; margin-bottom: 1px; border: solid #20a020; border-width: 0 0 2px 2px; rotate: -45deg; }
.cap { margin-top: 13px; padding-left: 1px; }
.text-row { display: flex; gap: 1px; align-items: flex-start; padding-left: 2px; padding-right: 23px; }
.mini { width: 12px; height: 12px; border: 1px solid #3c6488; border-radius: 2px; background: #f8fbff; }
.mini svg { width: 10px; height: 10px; }
.area { display: flex; flex: 1; height: 28px; border: 1px solid #8faecb; background: #fff; }
.area textarea { flex: 1; resize: none; outline: 0; }
.area-bar { display: flex; flex-direction: column; justify-content: space-between; width: 10px; background: #fafaf8; }
.area-bar svg { width: 10px; height: 10px; background: #efefe8; opacity: .5; }
.flip { rotate: 180deg; }
.row { display: flex; gap: 2px; align-items: center; margin-top: 2px; }
.row label { width: 18px; text-align: right; }
.sel-type { width: 109px; }
.sel-wide { flex: 1; margin-right: 38px; }
.to { display: flex; flex-direction: column; height: 44px; margin-top: 1px; padding-top: 1px; background: #ffbe80; }
.to .row { margin: 0; }
.to .sel-wide { margin-right: 0; }
.to .mini { margin-right: 24px; }
.radios { display: grid; grid-template-columns: 60px 79px; gap: 2px 0; justify-items: end; margin-top: 4px; }
.radios label { display: flex; gap: 2px; align-items: center; line-height: 10px; }
.radios .second { grid-column: 1 / 3; }
.radios input { width: 9px; height: 9px; border: 1px solid #50708c; border-radius: 50%; background: #fff; appearance: none; }
fieldset { margin: 0; padding: 0 3px 12px; border: 1px solid #d0c4b4; border-radius: 3px; min-width: 0; }
legend { margin-left: 3px; padding: 0 3px; line-height: 9px; }
.send { display: flex; }
.mode { display: flex; flex-direction: column; width: 124px; margin-right: 13px; }
.tick { display: flex; gap: 2px; align-items: center; margin-top: 11px; padding-left: 2px; }
.dates { display: flex; flex-direction: column; width: 52px; margin-right: 34px; }
.dates input { height: 12px; padding-left: 2px; border: 1px solid #8faecb; background: #fff; color: #222; }
.reason { display: flex; flex: 1; flex-direction: column; margin-right: 10px; }
.envelope { align-self: flex-end; width: 22px; height: 22px; margin-right: -10px; }

.side { display: flex; flex-direction: column; align-items: center; gap: 2px; width: 29px; padding-left: 2px; background: #ecf5fe; }
.spacer { flex: 1; }
.tool.end { margin-top: 4px; }

.popup { position: absolute; top: 0; bottom: 21px; left: 0; display: flex; flex-direction: column; width: 240px; border: 1px solid #5898cc; border-left: 0; border-width: 1px 2px 1px 0; background: #a0d6f9; }
.tree-wrap { display: flex; flex: 1; min-height: 0; overflow: hidden; }
.tree { display: flex; flex: 1; flex-direction: column; margin: -3px 0 0; padding: 0 0 0 11px; list-style: none; font: 7px/11px Inter, Arial, sans-serif; color: #182430; }
.tree li { position: relative; display: flex; flex: 1 1 0; align-items: center; min-height: 0; white-space: nowrap; }
.branch { position: relative; display: flex; align-items: center; justify-content: flex-start; align-self: stretch; width: 8px; background: linear-gradient(#90a8b4, #90a8b4) 2px 0 / 1px 100% no-repeat, linear-gradient(#90a8b4, #90a8b4) 2px 50% / 6px 1px no-repeat; }
.last .branch { background-size: 1px 50%, 6px 1px; }
.lv1 { padding-left: 9px; }
.toggle { display: block; width: 6px; height: 6px; border: 1px solid #7898a8; background: #d8eefa; }
.toggle svg { width: 4px; height: 4px; overflow: visible; }
.glyph { width: 10px; height: 10px; margin-right: 1px; }
.tree label { display: flex; gap: 3px; align-items: center; }
.box { width: 8px; height: 8px; border: 1px solid #404850; background: #fff; appearance: none; }
.on { color: #000; font-weight: bold; }
.box:checked { display: grid; place-items: center; }
.box:checked::before { content: ""; width: 4px; height: 2px; margin-bottom: 1px; border: solid #345; border-width: 0 0 1px 1px; rotate: -45deg; }
.off { color: #88a8bc; }
.scroll { display: flex; flex-direction: column; width: 10px; margin-right: 1px; background: #eef2fd; }
.scroll svg { width: 10px; height: 10px; background: #c8d4fa; }
.thumb { flex: 1; margin-top: 69px; background: #c4d0fb; border-radius: 1px; }
.actions { display: flex; gap: 11px; align-items: flex-end; justify-content: center; height: 12px; padding-right: 1px; }
.actions button { height: 11px; padding: 0 6px; border: 1px solid #445c78; border-radius: 2px; background: #f8f8f4; color: #111; line-height: 9px; }

.status { display: flex; align-items: center; gap: 3px; height: 15px; padding: 0 2px 0 382px; border-top: 1px solid #a4a294; background: linear-gradient(#f4f2e8, #e8e4d4); font: 7px/12px "DejaVu Sans Condensed", Tahoma, sans-serif; color: #111; }
.status i { width: 1px; height: 12px; margin-right: 11px; background: #ccc8b8; }
.status i:nth-child(6) { margin-right: 0; }
.s-icon { width: 11px; height: 11px; }
.zoom-icon { width: 8px; height: 8px; margin-left: auto; }
.caret { width: 5px; height: 3px; margin: 0 2px 0 5px; }
.grip { width: 8px; height: 8px; }
</style>
